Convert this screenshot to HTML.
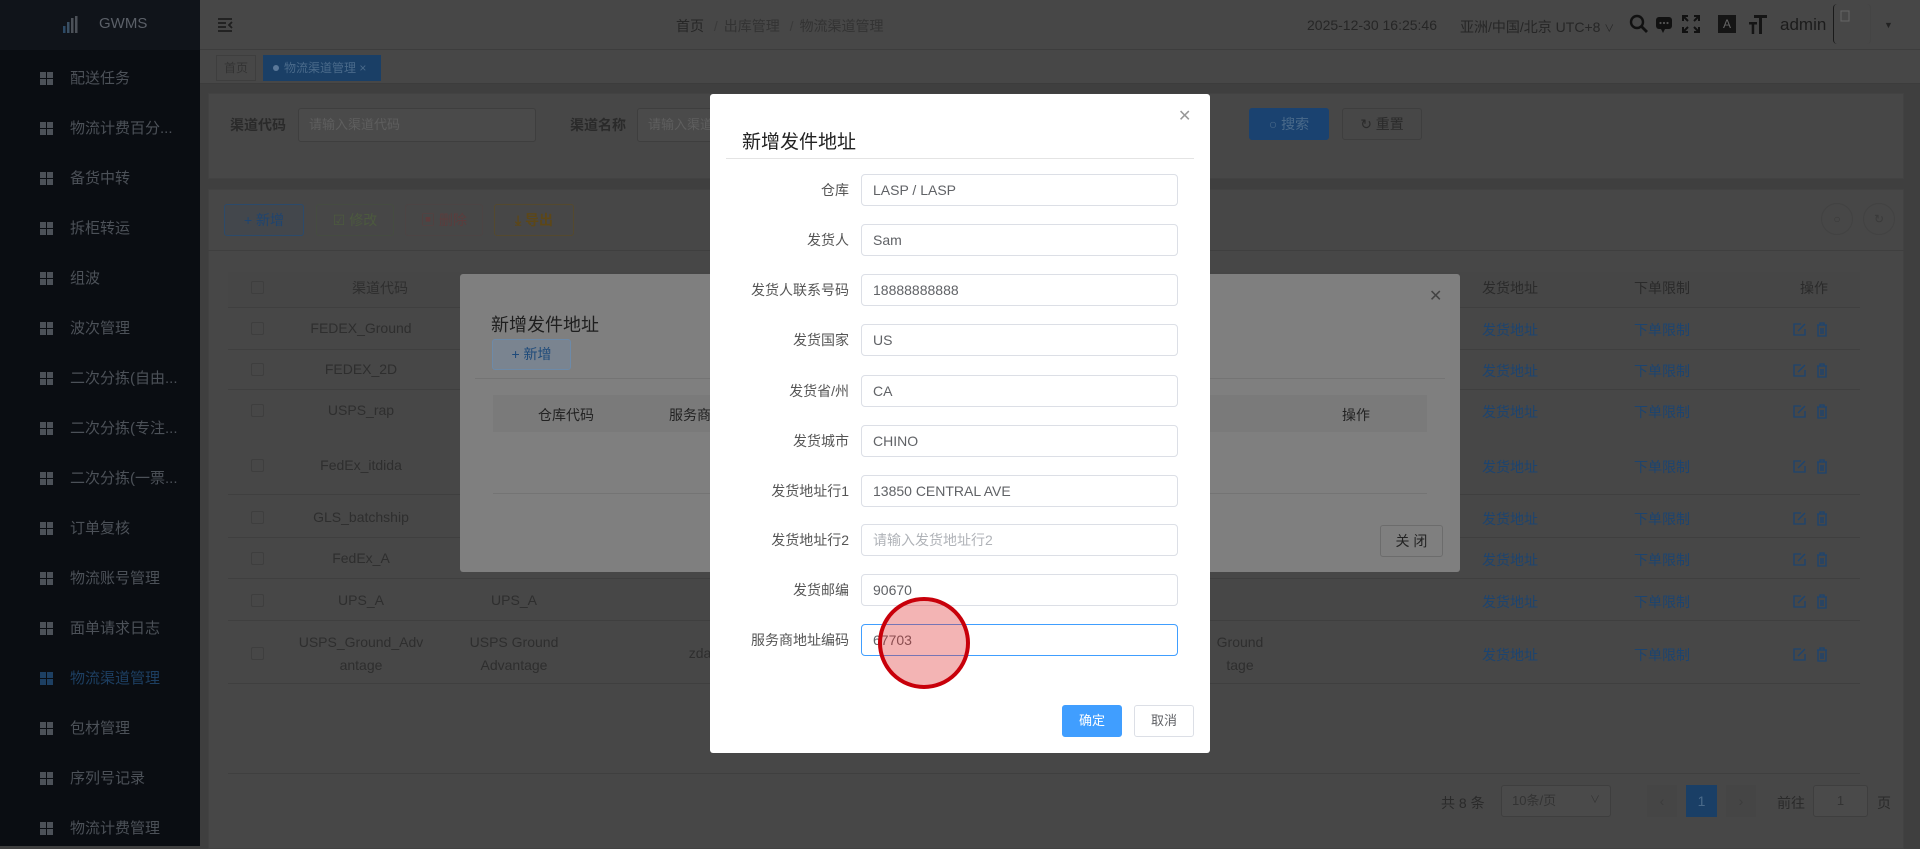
<!DOCTYPE html>
<html><head><meta charset="utf-8"><style>
*{box-sizing:border-box;margin:0;padding:0}
body{width:1920px;height:846px;overflow:hidden;position:relative;background:#3f3f3f;font-family:"Liberation Sans","Noto Sans CJK SC",sans-serif;font-size:14px;color:#2b2b2b}
.a{position:absolute}
.side{left:0;top:0;width:200px;height:846px;background:#0a0d12}
.logo{left:0;top:0;width:200px;height:50px;background:#10141a;color:#5b6068;font-size:15px}
.mi{left:40px;color:#4c5158;font-size:15px;height:20px;line-height:20px}
.mi i{position:absolute;left:0;top:3px;width:13px;height:13px;background:
linear-gradient(#4c5158,#4c5158) 0 0/6px 6px no-repeat,linear-gradient(#4c5158,#4c5158) 7px 0/6px 6px no-repeat,linear-gradient(#4c5158,#4c5158) 0 7px/6px 6px no-repeat,linear-gradient(#4c5158,#4c5158) 7px 7px/6px 6px no-repeat}
.mi span{margin-left:30px}
.hdr{left:200px;top:0;width:1720px;height:50px;background:#474747;border-bottom:1px solid #3d3d3d}
.tabs{left:200px;top:50px;width:1720px;height:34px;background:#474747;border-bottom:1px solid #3c3c3c}
.card{background:#474747;border:1px solid #424242}
.inp{border:1px solid #3e3e3e;border-radius:3px;background:#4a4a4a;color:#5e5e5e;font-size:13px;padding-left:10px}
.btn{border:1px solid;border-radius:3px;font-size:14px;text-align:center}
.th{color:#2a2a2a;font-size:14px}
.td{color:#2e2e2e;font-size:14px;text-align:center;width:200px;margin-left:-100px}
.lnk{color:#1c4470;font-size:14px}
.op{left:1792px;width:40px;height:16px}
.cb{width:13px;height:13px;border:1px solid #3e3e3e;border-radius:2px}
.row{left:228px;width:1632px;height:1px;background:#3f3f3f}
.fl{right:1071px;width:200px;text-align:right;color:#555;font-size:14px}
.fi{left:861px;width:317px;height:32px;border:1px solid #dcdfe6;border-radius:4px;padding-left:11px;line-height:30px;font-size:14px;color:#606266}
</style></head><body>
<div class="a side"></div>
<div class="a logo"><div class="a" style="left:62px;top:15px;width:18px;height:18px">
<svg width="18" height="18"><rect x="1" y="11" width="2.5" height="7" fill="#2c4a66"/><rect x="5" y="7" width="2.5" height="11" fill="#3a4f63"/><rect x="9" y="3" width="2.5" height="15" fill="#4c5158"/><rect x="13" y="1" width="2.5" height="17" fill="#4c5158"/></svg></div>
<div class="a" style="left:99px;top:15px;font-size:15px">GWMS</div></div>
<div class="a mi" style="top:69px"><i></i><span>配送任务</span></div>
<div class="a mi" style="top:119px"><i></i><span>物流计费百分...</span></div>
<div class="a mi" style="top:169px"><i></i><span>备货中转</span></div>
<div class="a mi" style="top:219px"><i></i><span>拆柜转运</span></div>
<div class="a mi" style="top:269px"><i></i><span>组波</span></div>
<div class="a mi" style="top:319px"><i></i><span>波次管理</span></div>
<div class="a mi" style="top:369px"><i></i><span>二次分拣(自由...</span></div>
<div class="a mi" style="top:419px"><i></i><span>二次分拣(专注...</span></div>
<div class="a mi" style="top:469px"><i></i><span>二次分拣(一票...</span></div>
<div class="a mi" style="top:519px"><i></i><span>订单复核</span></div>
<div class="a mi" style="top:569px"><i></i><span>物流账号管理</span></div>
<div class="a mi" style="top:619px"><i></i><span>面单请求日志</span></div>
<div class="a mi" style="top:669px;color:#1d3f62"><i style="background:linear-gradient(#1d3f62,#1d3f62) 0 0/6px 6px no-repeat,linear-gradient(#1d3f62,#1d3f62) 7px 0/6px 6px no-repeat,linear-gradient(#1d3f62,#1d3f62) 0 7px/6px 6px no-repeat,linear-gradient(#1d3f62,#1d3f62) 7px 7px/6px 6px no-repeat"></i><span>物流渠道管理</span></div>
<div class="a mi" style="top:719px"><i></i><span>包材管理</span></div>
<div class="a mi" style="top:769px"><i></i><span>序列号记录</span></div>
<div class="a mi" style="top:819px"><i></i><span>物流计费管理</span></div>

<div class="a hdr"></div>
<div class="a" style="left:217px;top:17px"><svg width="16" height="16"><path d="M1 2h14M1 6h8M1 10h8M1 14h14M15 5l-3 3 3 3" stroke="#1e1e1e" stroke-width="1.8" fill="none"/></svg></div>
<div class="a" style="left:676px;top:16px;font-size:14px;color:#262626">首页 <span style="color:#3a3a3a;margin:0 6px">/</span><span style="color:#333">出库管理</span> <span style="color:#3a3a3a;margin:0 6px">/</span><span style="color:#333">物流渠道管理</span></div>
<div class="a" style="left:1307px;top:17px;font-size:14px;color:#262626">2025-12-30 16:25:46</div>
<div class="a" style="left:1460px;top:17px;font-size:14px;color:#262626">亚洲/中国/北京 UTC+8 <span style="font-size:10px">∨</span></div>
<div class="a" style="left:1629px;top:14px"><svg width="20" height="20"><circle cx="8" cy="8" r="6" stroke="#111" stroke-width="2.4" fill="none"/><path d="M12 12l6 6" stroke="#111" stroke-width="2.8"/></svg></div>
<div class="a" style="left:1655px;top:16px"><svg width="18" height="18"><rect x="1" y="1" width="16" height="12" rx="3" fill="#111"/><path d="M6 13l2 4 2-4z" fill="#111"/><circle cx="5.5" cy="7" r="1.1" fill="#555"/><circle cx="9" cy="7" r="1.1" fill="#555"/><circle cx="12.5" cy="7" r="1.1" fill="#555"/></svg></div>
<div class="a" style="left:1681px;top:14px"><svg width="20" height="20" stroke="#111" stroke-width="2" fill="none"><path d="M2 7V2h5M13 2h5v5M18 13v5h-5M7 18H2v-5M2 2l5 5M18 2l-5 5M18 18l-5-5M2 18l5-5"/></svg></div>
<div class="a" style="left:1718px;top:15px;width:18px;height:18px;background:#151515;color:#666;font-size:12px;line-height:18px;text-align:center">A</div>
<div class="a" style="left:1748px;top:13px"><svg width="20" height="22" fill="#151515"><rect x="6" y="2" width="13" height="3"/><rect x="11" y="2" width="3" height="19"/><rect x="1" y="9" width="8" height="2.5"/><rect x="3.7" y="9" width="2.5" height="12"/></svg></div>
<div class="a" style="left:1780px;top:15px;font-size:17px;color:#1c1c1c">admin</div>
<div class="a" style="left:1833px;top:4px;width:38px;height:40px;border-left:1px solid #1a1a1a;border-right:1px solid #444;border-radius:4px"><svg class="a" style="left:6px;top:6px" width="10" height="12"><rect x="1" y="1" width="8" height="10" fill="none" stroke="#666"/></svg></div>
<div class="a" style="left:1884px;top:20px;font-size:9px;color:#222">▼</div>

<div class="a tabs"></div>
<div class="a" style="left:216px;top:55px;width:40px;height:26px;border:1px solid #3e3e3e;color:#333;font-size:12px;line-height:24px;text-align:center">首页</div>
<div class="a" style="left:263px;top:55px;width:118px;height:26px;background:#1a3f66;color:#4a6a8a;font-size:12px;line-height:26px;padding-left:10px"><span style="display:inline-block;width:6px;height:6px;border-radius:3px;background:#5a7899;margin-right:5px;vertical-align:1px"></span>物流渠道管理 ×</div>

<div class="a card" style="left:208px;top:93px;width:1696px;height:86px"></div>
<div class="a" style="left:230px;top:115px;font-weight:bold;color:#2a2a2a">渠道代码</div>
<div class="a inp" style="left:298px;top:108px;width:238px;height:34px;line-height:32px">请输入渠道代码</div>
<div class="a" style="left:570px;top:115px;font-weight:bold;color:#2a2a2a">渠道名称</div>
<div class="a inp" style="left:637px;top:108px;width:200px;height:34px;line-height:32px">请输入渠道</div>
<div class="a btn" style="left:1249px;top:108px;width:80px;height:32px;line-height:30px;background:#1a4270;border-color:#1a4270;color:#4a6a8a">○ 搜索</div>
<div class="a btn" style="left:1342px;top:108px;width:80px;height:32px;line-height:30px;border-color:#3e3e3e;color:#2a2a2a">↻ 重置</div>

<div class="a card" style="left:208px;top:189px;width:1696px;height:660px"></div>
<div class="a" style="left:208px;top:250px;width:1696px;height:1px;background:#3f3f3f"></div>
<div class="a btn" style="left:224px;top:204px;width:80px;height:32px;line-height:30px;border-color:#2c4a6a;background:#43474c;color:#1e4470">+ 新增</div>
<div class="a btn" style="left:316px;top:204px;width:78px;height:32px;line-height:30px;border-color:#454c41;color:#4c5a3e">☑ 修改</div>
<div class="a btn" style="left:405px;top:204px;width:78px;height:32px;line-height:30px;border-color:#4c4444;color:#5c3c3c">▣ 删除</div>
<div class="a btn" style="left:494px;top:204px;width:80px;height:32px;line-height:30px;border-color:#54492e;color:#5c4718;font-weight:bold">⤓ 导出</div>
<div class="a" style="left:1821px;top:203px;width:32px;height:32px;border:1px solid #424242;border-radius:16px;color:#3a3a3a;text-align:center;line-height:30px;font-size:12px">○</div>
<div class="a" style="left:1863px;top:203px;width:32px;height:32px;border:1px solid #424242;border-radius:16px;color:#3a3a3a;text-align:center;line-height:30px;font-size:12px">↻</div>

<div class="a" style="left:228px;top:272px;width:1632px;height:35px;background:#464646"></div>
<div class="a cb" style="left:251px;top:281px"></div>
<div class="a th td" style="left:380px;top:278px">渠道代码</div>
<div class="a th" style="left:1482px;top:278px">发货地址</div>
<div class="a th" style="left:1634px;top:278px">下单限制</div>
<div class="a th" style="left:1800px;top:278px">操作</div>
<div class="a row" style="top:307px"></div>
<div class="a row" style="top:349px"></div>
<div class="a row" style="top:389px"></div>
<div class="a row" style="top:494px"></div>
<div class="a row" style="top:537px"></div>
<div class="a row" style="top:578px"></div>
<div class="a row" style="top:620px"></div>
<div class="a row" style="top:683px"></div>
<div class="a row" style="top:773px"></div>

<div class="a cb" style="left:251px;top:322px"></div><div class="a td" style="left:361px;top:320px">FEDEX_Ground</div>
<div class="a cb" style="left:251px;top:363px"></div><div class="a td" style="left:361px;top:361px">FEDEX_2D</div>
<div class="a cb" style="left:251px;top:404px"></div><div class="a td" style="left:361px;top:402px">USPS_rap</div>
<div class="a cb" style="left:251px;top:459px"></div><div class="a td" style="left:361px;top:457px">FedEx_itdida</div>
<div class="a cb" style="left:251px;top:511px"></div><div class="a td" style="left:361px;top:509px">GLS_batchship</div>
<div class="a cb" style="left:251px;top:552px"></div><div class="a td" style="left:361px;top:550px">FedEx_A</div>
<div class="a cb" style="left:251px;top:594px"></div><div class="a td" style="left:361px;top:592px">UPS_A</div><div class="a td" style="left:514px;top:592px">UPS_A</div><div class="a td" style="left:760px;top:592px">omnish</div>
<div class="a cb" style="left:251px;top:647px"></div><div class="a td" style="left:361px;top:631px;line-height:23px">USPS_Ground_Adv<br>antage</div><div class="a td" style="left:514px;top:631px;line-height:23px">USPS Ground<br>Advantage</div><div class="a td" style="left:700px;top:645px">zda</div>
<div class="a td" style="left:1240px;top:631px;line-height:23px">Ground<br>tage</div>

<div class="a lnk" style="left:1482px;top:320px">发货地址</div><div class="a lnk" style="left:1634px;top:320px">下单限制</div>
<div class="a lnk" style="left:1482px;top:361px">发货地址</div><div class="a lnk" style="left:1634px;top:361px">下单限制</div>
<div class="a lnk" style="left:1482px;top:402px">发货地址</div><div class="a lnk" style="left:1634px;top:402px">下单限制</div>
<div class="a lnk" style="left:1482px;top:457px">发货地址</div><div class="a lnk" style="left:1634px;top:457px">下单限制</div>
<div class="a lnk" style="left:1482px;top:509px">发货地址</div><div class="a lnk" style="left:1634px;top:509px">下单限制</div>
<div class="a lnk" style="left:1482px;top:550px">发货地址</div><div class="a lnk" style="left:1634px;top:550px">下单限制</div>
<div class="a lnk" style="left:1482px;top:592px">发货地址</div><div class="a lnk" style="left:1634px;top:592px">下单限制</div>
<div class="a lnk" style="left:1482px;top:645px">发货地址</div><div class="a lnk" style="left:1634px;top:645px">下单限制</div>

<svg width="0" height="0" style="position:absolute"><defs><g id="ops" stroke="#1c4470" stroke-width="1.3" fill="none"><path d="M9 2H2v11h11V7M6 9l7-7"/><path d="M25 3h10M28 3V1h4v2M26 3v11h8V3M29 6v6M31 6v6"/></g></defs></svg>
<svg class="a op" style="top:322px"><use href="#ops"/></svg>
<svg class="a op" style="top:363px"><use href="#ops"/></svg>
<svg class="a op" style="top:404px"><use href="#ops"/></svg>
<svg class="a op" style="top:459px"><use href="#ops"/></svg>
<svg class="a op" style="top:511px"><use href="#ops"/></svg>
<svg class="a op" style="top:552px"><use href="#ops"/></svg>
<svg class="a op" style="top:594px"><use href="#ops"/></svg>
<svg class="a op" style="top:647px"><use href="#ops"/></svg>

<div class="a" style="left:1441px;top:793px;color:#2a2a2a">共 8 条</div>
<div class="a inp" style="left:1501px;top:785px;width:110px;height:32px;line-height:30px;color:#333">10条/页<span style="position:absolute;right:10px;font-size:10px">∨</span></div>
<div class="a" style="left:1647px;top:785px;width:30px;height:32px;background:#454545;color:#3c3c3c;text-align:center;line-height:32px">‹</div>
<div class="a" style="left:1686px;top:785px;width:31px;height:32px;background:#1a3f66;color:#4a6a8a;text-align:center;line-height:32px">1</div>
<div class="a" style="left:1726px;top:785px;width:30px;height:32px;background:#454545;color:#3c3c3c;text-align:center;line-height:32px">›</div>
<div class="a" style="left:1777px;top:793px;color:#2a2a2a">前往</div>
<div class="a inp" style="left:1813px;top:785px;width:55px;height:32px;line-height:30px;text-align:center;padding:0;color:#333">1</div>
<div class="a" style="left:1877px;top:793px;color:#2a2a2a">页</div>

<div class="a" style="left:460px;top:274px;width:1000px;height:298px;background:#7f7f7f;border-radius:3px"></div>
<div class="a" style="left:491px;top:311px;font-size:18px;color:#1e1e1e">新增发件地址</div>
<div class="a" style="left:1429px;top:286px;font-size:16px;color:#444">✕</div>
<div class="a btn" style="left:492px;top:339px;width:79px;height:31px;line-height:29px;border-color:#6d8aa8;background:#7a8490;color:#1e4a7a">+ 新增</div>
<div class="a" style="left:475px;top:378px;width:970px;height:1px;background:#747474"></div>
<div class="a" style="left:493px;top:395px;width:934px;height:37px;background:#7a7a7a"></div>
<div class="a" style="left:538px;top:405px;color:#222">仓库代码</div>
<div class="a" style="left:669px;top:405px;color:#222">服务商</div>
<div class="a" style="left:1342px;top:405px;color:#222">操作</div>
<div class="a" style="left:493px;top:493px;width:934px;height:1px;background:#747474"></div>
<div class="a btn" style="left:1380px;top:525px;width:63px;height:32px;line-height:30px;border-color:#6c6c6c;color:#222">关 闭</div>

<div class="a" style="left:710px;top:94px;width:500px;height:659px;background:#fff;border-radius:3px"></div>
<div class="a" style="left:742px;top:127px;font-size:19px;color:#222">新增发件地址</div>
<div class="a" style="left:1178px;top:106px;font-size:16px;color:#999">✕</div>
<div class="a" style="left:726px;top:158px;width:468px;height:1px;background:#e4e4e4"></div>

<div class="a fl" style="top:180px">仓库</div><div class="a fi" style="top:174px">LASP / LASP</div>
<div class="a fl" style="top:230px">发货人</div><div class="a fi" style="top:224px">Sam</div>
<div class="a fl" style="top:280px">发货人联系号码</div><div class="a fi" style="top:274px">18888888888</div>
<div class="a fl" style="top:330px">发货国家</div><div class="a fi" style="top:324px">US</div>
<div class="a fl" style="top:381px">发货省/州</div><div class="a fi" style="top:375px">CA</div>
<div class="a fl" style="top:431px">发货城市</div><div class="a fi" style="top:425px">CHINO</div>
<div class="a fl" style="top:481px">发货地址行1</div><div class="a fi" style="top:475px">13850 CENTRAL AVE</div>
<div class="a fl" style="top:530px">发货地址行2</div><div class="a fi" style="top:524px;color:#b0b3b8">请输入发货地址行2</div>
<div class="a fl" style="top:580px">发货邮编</div><div class="a fi" style="top:574px">90670</div>
<div class="a fl" style="top:630px">服务商地址编码</div><div class="a fi" style="top:624px;border-color:#409eff">67703</div>

<div class="a" style="left:878px;top:597px;width:92px;height:92px;border-radius:50%;border:4px solid #c8000a;background:rgba(220,40,40,0.35)"></div>

<div class="a btn" style="left:1062px;top:705px;width:60px;height:32px;line-height:30px;background:#409eff;border-color:#409eff;color:#fff;font-size:13px">确定</div>
<div class="a btn" style="left:1134px;top:705px;width:60px;height:32px;line-height:30px;border-color:#dcdfe6;color:#606266;font-size:13px">取消</div>
</body></html>
